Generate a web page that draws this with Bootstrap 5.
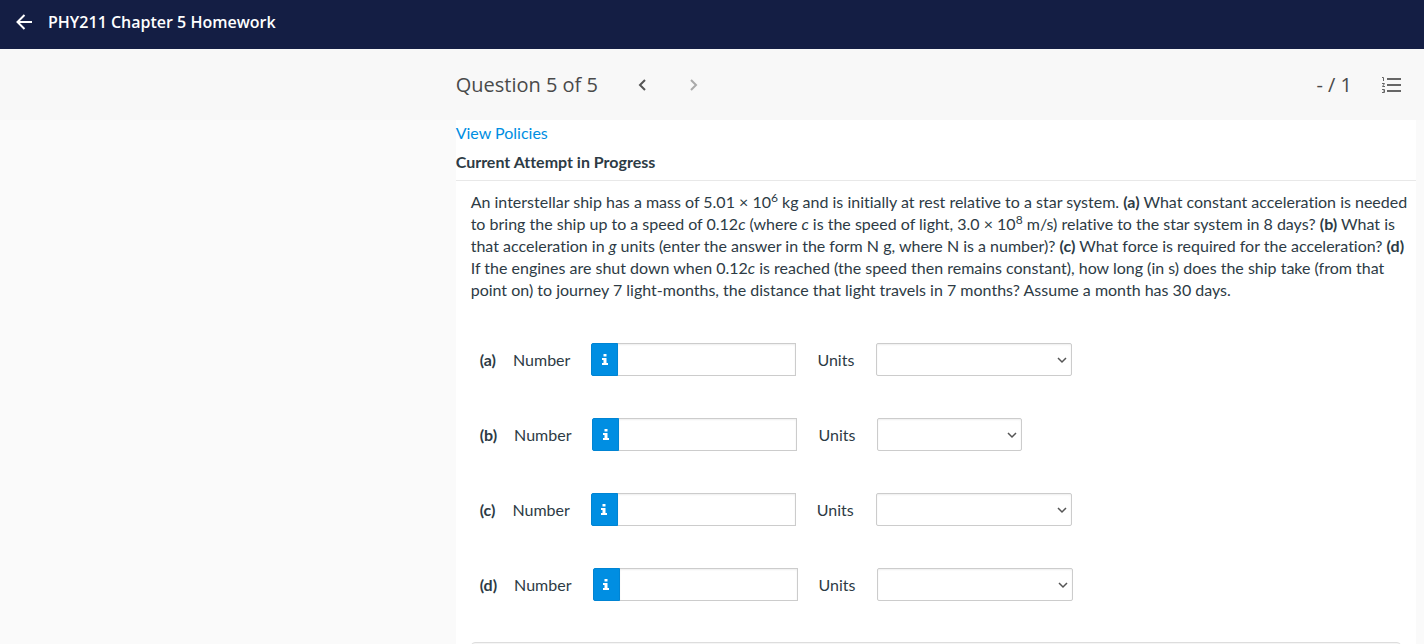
<!DOCTYPE html>
<html lang="en">
<head>
<meta charset="utf-8">
<meta name="viewport" content="width=device-width, initial-scale=1">
<title>PHY211 Chapter 5 Homework</title>
<link href="https://cdn.jsdelivr.net/npm/bootstrap@5.3.0/dist/css/bootstrap.min.css" rel="stylesheet">
<style>
body { background: #fafafa; color: #2d3b45; font: 16px/22px Lato, "Liberation Sans", sans-serif; font-variant-ligatures: none; }
.ui-font { font-family: "Open Sans", "Noto Sans", sans-serif; }
.top-bar { background: #141e44; height: 49px; padding: 0 16px 6px; }
.course-title { font-size: 16px; font-weight: 600; line-height: 20px; }
.side-space { flex: 0 0 32%; }
.question-bar { background: #f8f8f8; height: 71px; color: #4a4a4a; font-size: 20px; }
.question-title { font-size: 20px; font-weight: 400; line-height: 28px; margin: 0 18px 0 0; }
.bar-button { width: 52px; height: 40px; color: #555; }
.bar-button:disabled { color: #aaa; border: 0; opacity: 1; }
.question-sheet { margin-right: 8px; min-width: 0; }
.policy-link { color: #008ee2; padding-top: 2px; }
.attempt-heading { font-size: 16px; font-weight: 700; line-height: 22px; padding: 7px 0; border-bottom: 1px solid #e8e8e8; }
.question-body { padding: 10px 15px 0; }
.question-text { margin: 0 -15px 0 0; }
.question-text sup { font-size: 12px; line-height: 0; top: -6px; }
.answer-list { padding: 42px 9px 0; }
.answer-row { height: 33px; margin-bottom: 42px; }
.part-label { margin-right: 17px; }
.number-label { margin-right: 21px; }
.number-group { width: 205px; margin-right: 21px; }
.info-button { width: 27px; height: 33px; background: #008ee2; border: 1px solid #0084d3; border-radius: 2px 0 0 2px; color: #fff; }
.info-button:hover { background: #0084d3; border-color: #0084d3; color: #fff; }
.answer-field { height: 33px; min-height: 33px; padding: 4px 8px; border: 1px solid #ccc; border-radius: 0; box-shadow: inset 0 1px 2px #eee; }
.units-label { margin-right: 22px; }
.units-select { width: 196px; border-radius: 2px; padding-right: 24px; background-size: 10px 10px; background-position: right 4px center; background-image: url("data:image/svg+xml,%3Csvg xmlns='http://www.w3.org/2000/svg' viewBox='0 0 10 10'%3E%3Cpath d='M1 3l4 4 4-4' fill='none' stroke='%23555' stroke-width='1.5'/%3E%3C/svg%3E"); }
.units-short { width: 145px; }
.submit-panel { height: 48px; background: #f5f5f5; border: 1px solid #ddd; border-radius: 4px; margin: -1px 0 0; }
</style>
</head>
<body>
<div class="vh-100 d-flex flex-column overflow-hidden">
  <header class="top-bar ui-font d-flex align-items-center text-white flex-shrink-0">
    <a href="#" class="d-flex text-white me-3" aria-label="Back">
      <svg width="16" height="16" viewBox="0 0 16 16" fill="none" stroke="currentColor" stroke-width="2" aria-hidden="true"><path d="M16 8H2M8.5 1L1.5 8l7 7"/></svg>
    </a>
    <h1 class="course-title m-0">PHY211 Chapter 5 Homework</h1>
  </header>

  <div class="question-bar ui-font d-flex align-items-center flex-shrink-0">
    <div class="side-space"></div>
    <h2 class="question-title">Question 5 of 5</h2>
    <button type="button" class="bar-button btn p-0 border-0 d-flex align-items-center justify-content-center" aria-label="Previous question">
      <svg width="8" height="12" viewBox="0 0 8 12" fill="none" stroke="currentColor" stroke-width="2" aria-hidden="true"><path d="M7 1L2 6l5 5"/></svg>
    </button>
    <button type="button" class="bar-button btn p-0 border-0 d-flex align-items-center justify-content-center" disabled aria-label="Next question">
      <svg width="8" height="12" viewBox="0 0 8 12" fill="none" stroke="currentColor" stroke-width="2" aria-hidden="true"><path d="M1 1l5 5-5 5"/></svg>
    </button>
    <span class="ms-auto">- / 1</span>
    <button type="button" class="btn p-0 border-0 d-flex ms-4 me-3" aria-label="Question list">
      <svg width="32" height="18" viewBox="-6 0 32 18" fill="none" stroke="#666" aria-hidden="true"><path stroke-width="2" d="M5 3h14M5 9h14M5 15h14"/><path stroke-width="1" d="M0 1.5h1.5V5M0 7.5h2.5L.5 10.5H3M0 13.5h2.5v3H0M1 15h1.5"/></svg>
    </button>
  </div>

  <div class="d-flex flex-grow-1">
    <div class="side-space"></div>
    <main class="question-sheet bg-white flex-grow-1">
      <a href="#" class="policy-link text-decoration-none d-block">View Policies</a>
      <h3 class="attempt-heading m-0">Current Attempt in Progress</h3>
      <div class="question-body">
        <p class="question-text">An interstellar ship has a mass of 5.01 × 10<sup>6</sup> kg and is initially at rest relative to a star system. <b>(a)</b> What constant acceleration is needed<br>
        to bring the ship up to a speed of 0.12<i>c</i> (where <i>c</i> is the speed of light, 3.0 × 10<sup>8</sup> m/s) relative to the star system in 8 days? <b>(b)</b> What is<br>
        that acceleration in <i>g</i> units (enter the answer in the form N g, where N is a number)? <b>(c)</b> What force is required for the acceleration? <b>(d)</b><br>
        If the engines are shut down when 0.12<i>c</i> is reached (the speed then remains constant), how long (in s) does the ship take (from that<br>
        point on) to journey 7 light-months, the distance that light travels in 7 months? Assume a month has 30 days.</p>
        <form class="answer-list">
          <div class="answer-row d-flex align-items-center">
            <b class="part-label">(a)</b>
            <label class="number-label" for="number-a">Number</label>
            <div class="number-group input-group flex-nowrap">
              <button type="button" class="info-button btn p-0 d-flex align-items-center justify-content-center" aria-label="Number format help"><svg width="6" height="11" viewBox="0 0 6 11" fill="currentColor" aria-hidden="true"><path d="M1.5 0h3v2.5h-3zM0 4h4.5v5H6v2H0V9h1.5V6H0z"/></svg></button>
              <input id="number-a" type="text" class="answer-field form-control">
            </div>
            <label class="units-label" for="units-a">Units</label>
            <select id="units-a" class="answer-field units-select form-select"><option></option></select>
          </div>
          <div class="answer-row d-flex align-items-center">
            <b class="part-label">(b)</b>
            <label class="number-label" for="number-b">Number</label>
            <div class="number-group input-group flex-nowrap">
              <button type="button" class="info-button btn p-0 d-flex align-items-center justify-content-center" aria-label="Number format help"><svg width="6" height="11" viewBox="0 0 6 11" fill="currentColor" aria-hidden="true"><path d="M1.5 0h3v2.5h-3zM0 4h4.5v5H6v2H0V9h1.5V6H0z"/></svg></button>
              <input id="number-b" type="text" class="answer-field form-control">
            </div>
            <label class="units-label" for="units-b">Units</label>
            <select id="units-b" class="answer-field units-select units-short form-select"><option></option></select>
          </div>
          <div class="answer-row d-flex align-items-center">
            <b class="part-label">(c)</b>
            <label class="number-label" for="number-c">Number</label>
            <div class="number-group input-group flex-nowrap">
              <button type="button" class="info-button btn p-0 d-flex align-items-center justify-content-center" aria-label="Number format help"><svg width="6" height="11" viewBox="0 0 6 11" fill="currentColor" aria-hidden="true"><path d="M1.5 0h3v2.5h-3zM0 4h4.5v5H6v2H0V9h1.5V6H0z"/></svg></button>
              <input id="number-c" type="text" class="answer-field form-control">
            </div>
            <label class="units-label" for="units-c">Units</label>
            <select id="units-c" class="answer-field units-select form-select"><option></option></select>
          </div>
          <div class="answer-row d-flex align-items-center">
            <b class="part-label">(d)</b>
            <label class="number-label" for="number-d">Number</label>
            <div class="number-group input-group flex-nowrap">
              <button type="button" class="info-button btn p-0 d-flex align-items-center justify-content-center" aria-label="Number format help"><svg width="6" height="11" viewBox="0 0 6 11" fill="currentColor" aria-hidden="true"><path d="M1.5 0h3v2.5h-3zM0 4h4.5v5H6v2H0V9h1.5V6H0z"/></svg></button>
              <input id="number-d" type="text" class="answer-field form-control">
            </div>
            <label class="units-label" for="units-d">Units</label>
            <select id="units-d" class="answer-field units-select form-select"><option></option></select>
          </div>
        </form>
        <div class="submit-panel"></div>
      </div>
    </main>
  </div>
</div>
</body>
</html>
